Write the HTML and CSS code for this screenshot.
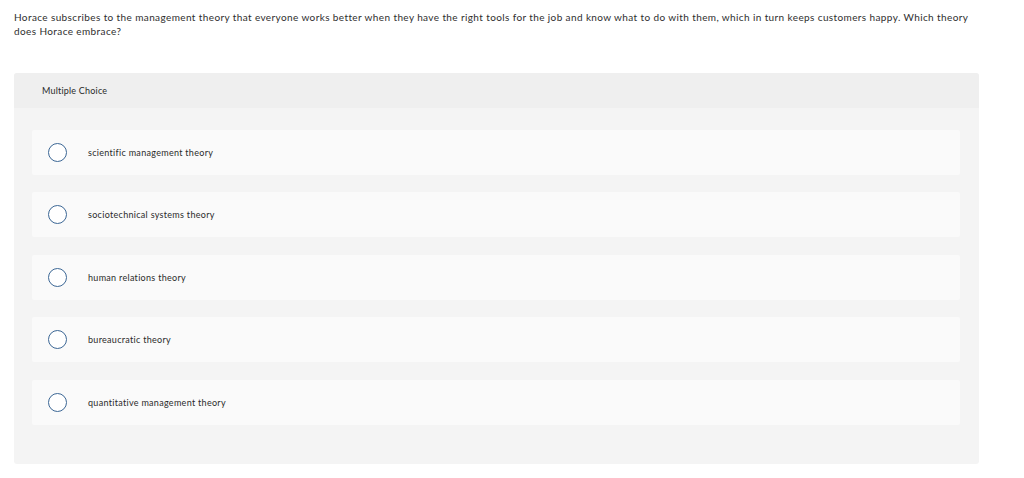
FILE: index.html
```html
<!DOCTYPE html>
<html>
<head>
<meta charset="utf-8">
<link rel="stylesheet" href="styles.css">
</head>
<body>
<div class="page">
  <p class="question">Horace subscribes to the management theory that everyone works better when they have the right tools for the job and know what to do with them, which in turn keeps customers happy. Which theory does Horace embrace?</p>
  <div class="card">
    <div class="card-head">Multiple Choice</div>
    <div class="options">
      <label class="option"><span class="radio"></span><span class="label">scientific management theory</span></label>
      <label class="option"><span class="radio"></span><span class="label">sociotechnical systems theory</span></label>
      <label class="option"><span class="radio"></span><span class="label">human relations theory</span></label>
      <label class="option"><span class="radio"></span><span class="label">bureaucratic theory</span></label>
      <label class="option"><span class="radio"></span><span class="label">quantitative management theory</span></label>
    </div>
  </div>
</div>
</body>
</html>
```

FILE: styles.css
```css
html, body {
  margin: 0;
  padding: 0;
  background: #ffffff;
}
body {
  font-family: Lato, "Liberation Sans", sans-serif;
  color: #2b2b2b;
}
.page {
  padding: 10px 45px 0 14px;
}
.question {
  margin: 0;
  font-size: 10px;
  line-height: 14px;
  letter-spacing: 0.39px;
  width: 965px;
  color: #2e2e2e;
}
.card {
  margin-top: 35px;
  width: 965px;
  background: #f4f4f4;
  border-radius: 3px;
  overflow: hidden;
}
.card-head {
  background: #efefef;
  height: 35px;
  display: flex;
  align-items: center;
  padding-left: 28px;
  font-size: 9px;
  letter-spacing: 0.2px;
  color: #2a2a2a;
}
.options {
  display: flex;
  flex-direction: column;
  gap: 17.4px;
  padding: 22px 19px 39px 18px;
}
.option {
  display: flex;
  align-items: center;
  height: 45px;
  background: #fafafa;
  border-radius: 2px;
}
.radio {
  width: 17px;
  height: 17px;
  border: 1px solid #3c6795;
  border-radius: 50%;
  margin-left: 16px;
  box-sizing: content-box;
  background: #fff;
  flex: none;
}
.label {
  margin-left: 21px;
  font-size: 9px;
  letter-spacing: 0.3px;
  color: #2a2a2a;
}
```
